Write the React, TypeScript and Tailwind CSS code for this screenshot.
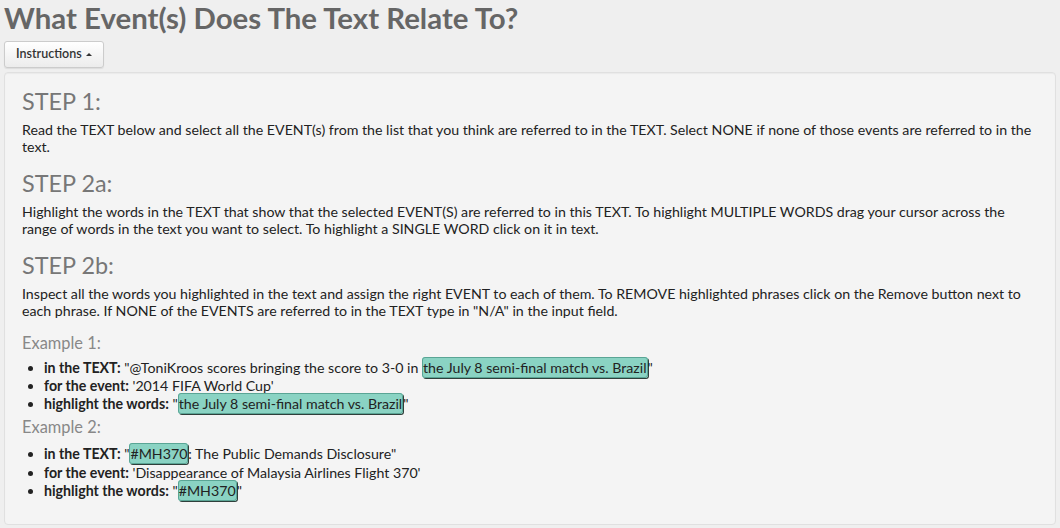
import React from "react";

const Hl = ({ children }: { children: React.ReactNode }) => (
  <span className="rounded-[3px] border border-[#5aa595] bg-[#8ad3c3] py-[1px] shadow-[1px_1px_0_#2f3f3b]">{children}</span>
);

export default function App() {
  return (
    <div className="min-h-[528px] bg-[#efefef] px-1 pb-1 text-[#222] [font-family:Lato,'Noto_Sans',sans-serif]">
      <h1 className="m-0 pt-0 text-[29.4px] font-bold leading-[36px] text-[#666]">What Event(s) Does The Text Relate To?</h1>
      <div className="mt-[5px]">
        <button className="flex h-[27px] items-center gap-1 rounded-[3px] border border-[#ccc] bg-gradient-to-b from-white to-[#ececec] px-[11px] text-[12.5px] font-semibold text-[#333] shadow-[0_1px_1px_rgba(0,0,0,0.08)]">
          Instructions
          <span className="mt-[-1px] h-0 w-0 border-x-[3px] border-b-[3px] border-x-transparent border-b-[#333]" />
        </button>
      </div>
      <div className="mt-[4px] rounded-[4px] border border-[#e0e0e0] bg-[#f4f4f4] px-[17px] pb-[23px] pt-[13px] shadow-[inset_0_1px_1px_rgba(0,0,0,0.04)]">
        <h3 className="text-[23.4px] leading-[30px] text-[#777]">STEP 1:</h3>
        <p className="mt-[5px] text-[14.2px] leading-[17px]">
          Read the TEXT below and select all the EVENT(s) from the list that you think are referred to in the TEXT. Select NONE if none of those events are referred to in the text.
        </p>
        <h3 className="mt-[13px] text-[23.4px] leading-[30px] text-[#777]">STEP 2a:</h3>
        <p className="mt-[5px] text-[14.2px] leading-[17px]">
          Highlight the words in the TEXT that show that the selected EVENT(S) are referred to in this TEXT. To highlight MULTIPLE WORDS drag your cursor across the range of words in the text you want to select. To highlight a SINGLE WORD click on it in text.
        </p>
        <h3 className="mt-[13px] text-[23.4px] leading-[30px] text-[#777]">STEP 2b:</h3>
        <p className="mt-[5px] text-[14.2px] leading-[17px]">
          Inspect all the words you highlighted in the text and assign the right EVENT to each of them. To REMOVE highlighted phrases click on the Remove button next to each phrase. If NONE of the EVENTS are referred to in the TEXT type in "N/A" in the input field.
        </p>
        <h4 className="mt-[13px] text-[16.4px] leading-[22px] text-[#888]">Example 1:</h4>
        <ul className="mt-[5px] list-disc pl-[22px] text-[14.2px] leading-[18px]">
          <li><b>in the TEXT:</b> "@ToniKroos scores bringing the score to 3-0 in <Hl>the July 8 semi-final match vs. Brazil</Hl>"</li>
          <li><b>for the event:</b> '2014 FIFA World Cup'</li>
          <li><b>highlight the words:</b> "<Hl>the July 8 semi-final match vs. Brazil</Hl>"</li>
        </ul>
        <h4 className="mt-[3px] text-[16.4px] leading-[22px] text-[#888]">Example 2:</h4>
        <ul className="mt-[7px] list-disc pl-[22px] text-[14.2px] leading-[18.5px]">
          <li><b>in the TEXT:</b> "<Hl>#MH370</Hl>: The Public Demands Disclosure"</li>
          <li><b>for the event:</b> 'Disappearance of Malaysia Airlines Flight 370'</li>
          <li><b>highlight the words:</b> "<Hl>#MH370</Hl>"</li>
        </ul>
      </div>
    </div>
  );
}
